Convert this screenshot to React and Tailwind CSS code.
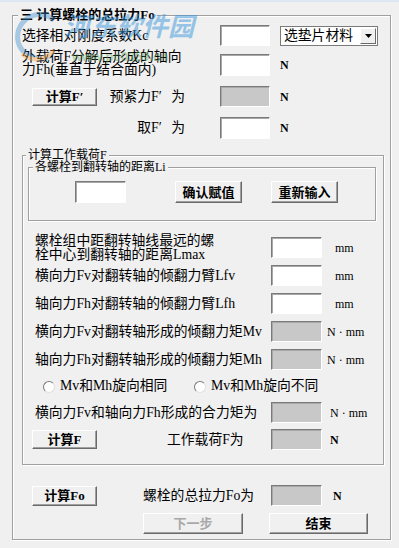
const face = "font-['Liberation_Serif','Noto_Sans_CJK_SC',serif]";

// 原界面里 F′ 的 ′ 占一个汉字宽
const Prime = () => <span className="inline-block w-[0.9em] text-left">′</span>;

function Fld({ gray, w = 'w-[51px]', h = 'h-[21px]' }) {
  return (
    <div
      className={`${w} ${h} shrink-0 border border-t-[#7a7a7a] border-l-[#7a7a7a] border-b-white border-r-white shadow-[inset_1px_1px_0_#a8a8a8] ${
        gray ? 'bg-[#c8c8c8]' : 'bg-white'
      }`}
    />
  );
}

function Btn({ children, w = 'w-[65px]', h = 'h-[20px]', disabled, className = '' }) {
  return (
    <div
      className={`${w} ${h} ${className} shrink-0 flex items-center justify-center bg-[#f0f0f0] border border-t-white border-l-white border-r-[#6a6a6a] border-b-[#6a6a6a] shadow-[inset_-1px_-1px_0_#a0a0a0] text-[13px] leading-none font-bold ${
        disabled ? 'text-[#a8a8a8]' : 'text-black'
      }`}
    >
      {children}
    </div>
  );
}

function Unit({ children, className = '' }) {
  return (
    <span className={`font-['Liberation_Serif',serif] text-[12px] leading-none ${className}`}>
      {children}
    </span>
  );
}

function Radio({ children }) {
  return (
    <div className="flex items-center">
      <span className="w-[12px] h-[12px] rounded-full bg-white border border-t-[#7a7a7a] border-l-[#7a7a7a] border-b-[#e0e0e0] border-r-[#e0e0e0]" />
      <span className="ml-[5px]">{children}</span>
    </div>
  );
}

// row inside "计算工作载荷F"
function Row({ label, gray, unit, unitGap = 'ml-[13px]', className = '' }) {
  return (
    <div className={`flex items-center h-[21px] ml-[12px] ${className}`}>
      <div className="w-[236px] leading-[14px]">{label}</div>
      <Fld gray={gray} />
      <Unit className={unitGap}>{unit}</Unit>
    </div>
  );
}

export default function App() {
  return (
    <div className={`relative w-[399px] h-[548px] overflow-hidden bg-[#f0f0f0] text-black text-[13.8px] ${face}`}>
      <div className="h-[2px] bg-[#dce7f3]" />

      {/* 外框 */}
      <div className="relative ml-[12px] mt-[13px] w-[379px] h-[525px] border border-[#a0a0a0] shadow-[inset_1px_1px_0_#fff,1px_1px_0_#fff] pl-[9px] pt-[9px]">
        <span className="absolute left-[5px] -top-[9px] px-[2px] bg-[#f0f0f0] text-[13px] leading-[16px] font-bold">
          三 计算螺栓的总拉力Fo
        </span>

        <div className="flex items-center h-[21px]">
          <div className="w-[198px] leading-[16px]">选择相对刚度系数Kc</div>
          <Fld w="w-[50px]" />
          <div className="ml-[10px] w-[98px] h-[20px] bg-white border border-[#7a7a7a] flex items-center justify-between pl-[3px]">
            <span className="leading-none">选垫片材料</span>
            <span className="w-[16px] h-[16px] mr-[1px] flex items-center justify-center bg-[#f0f0f0] border border-t-white border-l-white border-r-[#6a6a6a] border-b-[#6a6a6a]">
              <svg width="7" height="4" viewBox="0 0 7 4"><path d="M0 0h7L3.5 4z" fill="#000" /></svg>
            </span>
          </div>
        </div>

        <div className="mt-[8px] flex items-center h-[22px]">
          <div className="w-[198px] leading-[13px] -mt-[4px]">
            外载荷F分解后形成的轴向
            <br />
            力Fh(垂直于结合面内)
          </div>
          <Fld w="w-[50px]" h="h-[22px]" />
          <Unit className="ml-[10px] font-bold">N</Unit>
        </div>

        <div className="mt-[10px] flex items-center h-[21px]">
          <div className="w-[198px] flex items-center pr-[35px]">
            <Btn h="h-[18px]" className="ml-[10px]">计算F′</Btn>
            <span className="ml-auto leading-none">预紧力F<Prime />为</span>
          </div>
          <Fld gray w="w-[50px]" />
          <Unit className="ml-[10px] font-bold">N</Unit>
        </div>

        <div className="mt-[10px] flex items-center h-[22px]">
          <div className="w-[198px] flex pr-[35px]">
            <span className="ml-auto leading-none">取F<Prime />为</span>
          </div>
          <Fld w="w-[50px]" h="h-[22px]" />
          <Unit className="ml-[10px] font-bold">N</Unit>
        </div>

        {/* 计算工作载荷F */}
        <div className="relative mt-[16px] w-[362px] h-[310px] border border-[#a0a0a0] shadow-[inset_1px_1px_0_#fff,1px_1px_0_#fff] pt-[11px]">
          <span className="absolute left-[3px] -top-[9px] px-[2px] bg-[#f0f0f0] text-[12px] leading-[16px]">
            计算工作载荷F
          </span>

          <div className="relative ml-[5px] w-[348px] h-[54px] border border-[#a0a0a0] shadow-[inset_1px_1px_0_#fff,1px_1px_0_#fff] pt-[13px] flex items-start">
            <span className="absolute left-[4px] -top-[8px] px-[2px] bg-[#f0f0f0] text-[12px] leading-[15px]">
              各螺栓到翻转轴的距离Li
            </span>
            <div className="ml-[46px]"><Fld h="h-[22px]" /></div>
            <Btn w="w-[67px]" h="h-[22px]" className="ml-[49px]">确认赋值</Btn>
            <Btn w="w-[67px]" h="h-[22px]" className="ml-[29px]">重新输入</Btn>
          </div>

          <Row
            className="mt-[16px]"
            label={<>螺栓组中距翻转轴线最远的螺<br />栓中心到翻转轴的距离Lmax</>}
            unit="mm"
          />
          <Row className="mt-[7px]" label="横向力Fv对翻转轴的倾翻力臂Lfv" unit="mm" />
          <Row className="mt-[7px]" label="轴向力Fh对翻转轴的倾翻力臂Lfh" unit="mm" />
          <Row className="mt-[7px]" label="横向力Fv对翻转轴形成的倾翻力矩Mv" gray unit="N · mm" unitGap="ml-[5px]" />
          <Row className="mt-[7px]" label="轴向力Fh对翻转轴形成的倾翻力矩Mh" gray unit="N · mm" unitGap="ml-[5px]" />

          <div className="mt-[7px] h-[19px] ml-[20px] flex items-center">
            <div className="w-[151px]"><Radio>Mv和Mh旋向相同</Radio></div>
            <Radio>Mv和Mh旋向不同</Radio>
          </div>

          <Row className="mt-[6px]" label="横向力Fv和轴向力Fh形成的合力矩为" gray unit="N · mm" unitGap="ml-[8px]" />

          <div className="mt-[6px] ml-[9px] flex items-center h-[21px]">
            <Btn h="h-[19px]">计算F</Btn>
            <div className="w-[174px] pl-[70px] leading-none">工作载荷F为</div>
            <Fld gray />
            <Unit className="ml-[8px] font-bold">N</Unit>
          </div>
        </div>

        <div className="mt-[20px] flex items-center h-[21px]">
          <Btn className="ml-[10px]">计算Fo</Btn>
          <div className="ml-[46px] w-[128px] leading-none">螺栓的总拉力Fo为</div>
          <Fld gray />
          <Unit className="ml-[11px] font-bold">N</Unit>
        </div>

        <div className="mt-[7px] flex items-center">
          <Btn disabled w="w-[100px]" h="h-[21px]" className="ml-[121px]">下一步</Btn>
          <Btn w="w-[99px]" h="h-[21px]" className="ml-[26px]">结束</Btn>
        </div>
      </div>

      {/* watermark */}
      <div className="absolute left-[10px] top-[10px] pointer-events-none">
        <svg width="52" height="54" viewBox="0 0 52 54" className="opacity-40">
          <path d="M44 10 A22 22 0 1 0 40 46" fill="none" stroke="#3d8fd0" strokeWidth="5" />
          <path d="M12 44 A22 22 0 0 0 44 40" fill="none" stroke="#f0a040" strokeWidth="4" />
        </svg>
      </div>
      <div className="absolute left-[64px] top-[12px] text-[26px] leading-none font-bold italic text-[#3d98dc] opacity-50 font-['Noto_Sans_CJK_SC',sans-serif] pointer-events-none">
        河东软件园
      </div>
      <div className="absolute left-[72px] top-[50px] text-[13px] leading-none font-bold text-[#4f9f55] opacity-40 font-['Liberation_Sans',sans-serif] pointer-events-none">
        www.pc0359.cn
      </div>
    </div>
  );
}
